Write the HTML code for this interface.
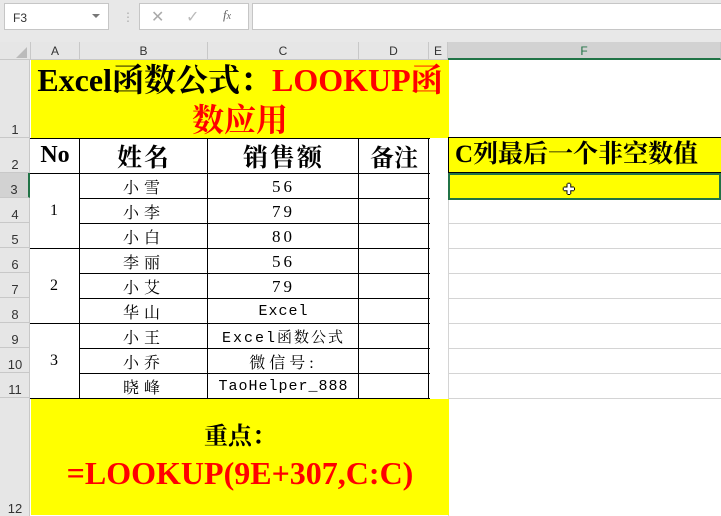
<!DOCTYPE html>
<html><head><meta charset="utf-8"><style>
*{margin:0;padding:0;box-sizing:border-box}
body{width:721px;height:516px;overflow:hidden;background:#fff;position:relative;font-family:"Liberation Serif","Noto Serif CJK SC",serif}
.a{position:absolute}
.hdr{background:#e6e6e6;color:#444;font-family:"Liberation Sans",sans-serif;font-size:12px}
.ch{position:absolute;top:42px;height:18px;border-right:1px solid #c8c8c8;text-align:center;line-height:18px;font-family:"Liberation Sans",sans-serif;font-size:12px;color:#333}
.rh{position:absolute;left:0;width:30px;border-bottom:1px solid #c8c8c8;font-family:"Liberation Sans",sans-serif;font-size:13px;color:#333;text-align:center;display:flex;align-items:flex-end;justify-content:center}
.c{position:absolute;display:flex;align-items:center;justify-content:center;font-size:15px;letter-spacing:2px;color:#000}
.g{position:absolute;background:#d4d4d4}
.k{position:absolute;background:#000}
</style></head><body>
<div class="a" style="left:0;top:0;width:721px;height:42px;background:#e8e8e8"></div>
<div class="a" style="left:4px;top:3px;width:105px;height:27px;background:#fff;border:1px solid #c6c6c6;font:12px 'Liberation Sans',sans-serif;color:#333;padding:7px 0 0 8px">F3</div>
<div class="a" style="left:92px;top:14px;width:0;height:0;border-left:4px solid transparent;border-right:4px solid transparent;border-top:4px solid #777"></div>
<div class="a" style="left:122px;top:10px;color:#aaa;font:12px sans-serif">⋮</div>
<div class="a" style="left:139px;top:3px;width:110px;height:27px;background:#fff;border:1px solid #c6c6c6"></div>
<div class="a" style="left:151px;top:7px;color:#aaa;font:16px 'Liberation Sans',sans-serif">✕</div>
<div class="a" style="left:186px;top:7px;color:#bbb;font:16px 'DejaVu Sans',sans-serif">✓</div>
<div class="a" style="left:223px;top:7px;color:#666;font:italic 13px 'Liberation Serif',serif">f<span style="font-size:10px">x</span></div>
<div class="a" style="left:252px;top:3px;width:469px;height:27px;background:#fff;border:1px solid #c6c6c6;border-right:none"></div>
<div class="a hdr" style="left:0;top:42px;width:721px;height:18px;border-bottom:1px solid #c8c8c8"></div>
<div class="a" style="left:16px;top:47px;width:0;height:0;border-left:11px solid transparent;border-bottom:11px solid #bbb"></div>
<div class="ch" style="left:30px;width:50px;border-left:1px solid #c8c8c8">A</div>
<div class="ch" style="left:80px;width:128px">B</div>
<div class="ch" style="left:208px;width:151px">C</div>
<div class="ch" style="left:359px;width:70px">D</div>
<div class="ch" style="left:429px;width:19px">E</div>
<div class="ch" style="left:448px;width:273px;background:#d2d2d2;color:#217346;border-bottom:2px solid #217346">F</div>
<div class="a hdr" style="left:0;top:60px;width:30px;height:456px;border-right:1px solid #c8c8c8"></div>
<div class="rh" style="top:60px;height:78px">1</div>
<div class="rh" style="top:138px;height:35px">2</div>
<div class="rh" style="top:173px;height:25px;background:#d2d2d2;border-right:2px solid #217346">3</div>
<div class="rh" style="top:198px;height:25px">4</div>
<div class="rh" style="top:223px;height:25px">5</div>
<div class="rh" style="top:248px;height:25px">6</div>
<div class="rh" style="top:273px;height:25px">7</div>
<div class="rh" style="top:298px;height:25px">8</div>
<div class="rh" style="top:323px;height:25px">9</div>
<div class="rh" style="top:348px;height:25px">10</div>
<div class="rh" style="top:373px;height:25px">11</div>
<div class="rh" style="top:398px;height:118px;border-bottom:none">12</div>
<div class="g" style="left:448px;top:60px;width:1px;height:456px"></div>
<div class="g" style="left:449px;top:223px;width:272px;height:1px"></div>
<div class="g" style="left:449px;top:248px;width:272px;height:1px"></div>
<div class="g" style="left:449px;top:273px;width:272px;height:1px"></div>
<div class="g" style="left:449px;top:298px;width:272px;height:1px"></div>
<div class="g" style="left:449px;top:323px;width:272px;height:1px"></div>
<div class="g" style="left:449px;top:348px;width:272px;height:1px"></div>
<div class="g" style="left:449px;top:373px;width:272px;height:1px"></div>
<div class="g" style="left:449px;top:398px;width:272px;height:1px"></div>
<div class="g" style="left:449px;top:198px;width:272px;height:1px"></div>
<div class="a" style="left:31px;top:60px;width:418px;height:78px;background:#ff0;text-align:center;font-weight:bold;font-size:32px;line-height:40px;padding-top:0;white-space:nowrap;overflow:hidden"><span style="color:#000">Excel函数公式：</span><span style="color:#f00">LOOKUP函<br>数应用</span></div>
<div class="a" style="left:448px;top:137px;width:273px;height:36px;background:#ff0;border:1px solid #000;border-right:none;font-weight:bold;font-size:25px;line-height:34px;padding-left:6px;white-space:nowrap">C列最后一个非空数值</div>
<div class="a" style="left:448px;top:173px;width:273px;height:27px;background:#ff0;border:2px solid #217346"></div>
<div class="a" style="left:563px;top:182px;font:bold 14px 'DejaVu Sans',sans-serif;color:#fff;text-shadow:0 0 1px #000,0 0 1px #000,1px 0 #000,-1px 0 #000,0 1px #000,0 -1px #000">✚</div>
<div class="c" style="left:30px;top:138px;width:50px;height:35px;font-weight:bold;font-size:24px;letter-spacing:0">No</div>
<div class="c" style="left:80px;top:138px;width:128px;height:35px;font-weight:bold;font-size:25px;letter-spacing:2px">姓名</div>
<div class="c" style="left:208px;top:138px;width:151px;height:35px;font-weight:bold;font-size:25px;letter-spacing:2px">销售额</div>
<div class="c" style="left:359px;top:138px;width:70px;height:35px;font-weight:bold;font-size:24px;letter-spacing:0">备注</div>
<div class="k" style="left:30px;top:138px;width:400px;height:1px"></div>
<div class="k" style="left:30px;top:173px;width:400px;height:1px"></div>
<div class="k" style="left:80px;top:198px;width:350px;height:1px"></div>
<div class="k" style="left:80px;top:223px;width:350px;height:1px"></div>
<div class="k" style="left:30px;top:248px;width:400px;height:1px"></div>
<div class="k" style="left:80px;top:273px;width:350px;height:1px"></div>
<div class="k" style="left:80px;top:298px;width:350px;height:1px"></div>
<div class="k" style="left:30px;top:323px;width:400px;height:1px"></div>
<div class="k" style="left:80px;top:348px;width:350px;height:1px"></div>
<div class="k" style="left:80px;top:373px;width:350px;height:1px"></div>
<div class="k" style="left:30px;top:398px;width:400px;height:1px"></div>
<div class="k" style="left:79px;top:138px;width:1px;height:261px"></div>
<div class="k" style="left:207px;top:138px;width:1px;height:261px"></div>
<div class="k" style="left:358px;top:138px;width:1px;height:261px"></div>
<div class="k" style="left:428px;top:138px;width:1px;height:261px"></div>
<div class="c" style="left:30px;top:173px;width:50px;height:75px;font-size:16px">1</div>
<div class="c" style="left:30px;top:248px;width:50px;height:75px;font-size:16px">2</div>
<div class="c" style="left:30px;top:323px;width:50px;height:75px;font-size:16px">3</div>
<div class="c" style="left:80px;top:174px;width:128px;height:25px;font-size:16px;letter-spacing:5px">小雪</div>
<div class="c" style="left:80px;top:199px;width:128px;height:25px;font-size:16px;letter-spacing:5px">小李</div>
<div class="c" style="left:80px;top:224px;width:128px;height:25px;font-size:16px;letter-spacing:5px">小白</div>
<div class="c" style="left:80px;top:249px;width:128px;height:25px;font-size:16px;letter-spacing:5px">李丽</div>
<div class="c" style="left:80px;top:274px;width:128px;height:25px;font-size:16px;letter-spacing:5px">小艾</div>
<div class="c" style="left:80px;top:299px;width:128px;height:25px;font-size:16px;letter-spacing:5px">华山</div>
<div class="c" style="left:80px;top:324px;width:128px;height:25px;font-size:16px;letter-spacing:5px">小王</div>
<div class="c" style="left:80px;top:349px;width:128px;height:25px;font-size:16px;letter-spacing:5px">小乔</div>
<div class="c" style="left:80px;top:374px;width:128px;height:25px;font-size:16px;letter-spacing:5px">晓峰</div>
<div class="c" style="left:208px;top:174px;width:151px;height:25px;font-size:17px;letter-spacing:3px">56</div>
<div class="c" style="left:208px;top:199px;width:151px;height:25px;font-size:17px;letter-spacing:3px">79</div>
<div class="c" style="left:208px;top:224px;width:151px;height:25px;font-size:17px;letter-spacing:3px">80</div>
<div class="c" style="left:208px;top:249px;width:151px;height:25px;font-size:17px;letter-spacing:3px">56</div>
<div class="c" style="left:208px;top:274px;width:151px;height:25px;font-size:17px;letter-spacing:3px">79</div>
<div class="c" style="left:208px;top:299px;width:151px;height:25px;font-family:'Liberation Mono','Noto Serif CJK SC',monospace;font-size:15px;letter-spacing:1px">Excel</div>
<div class="c" style="left:208px;top:324px;width:151px;height:25px;font-family:'Liberation Mono','Noto Serif CJK SC',monospace;font-size:15px;letter-spacing:2px">Excel函数公式</div>
<div class="c" style="left:208px;top:349px;width:151px;height:25px;font-size:16px;letter-spacing:4px">微信号:</div>
<div class="c" style="left:208px;top:374px;width:151px;height:25px;font-family:'Liberation Mono',monospace;font-size:15px;letter-spacing:1px">TaoHelper_888</div>
<div class="a" style="left:31px;top:399px;width:418px;height:116px;background:#ff0;text-align:center;font-weight:bold">
<div style="font-size:24px;line-height:28px;margin-top:24px">重点：</div>
<div style="font-size:32px;line-height:36px;color:#f00;margin-top:4px;white-space:nowrap">=LOOKUP(9E+307,C:C)</div>
</div>
</body></html>
